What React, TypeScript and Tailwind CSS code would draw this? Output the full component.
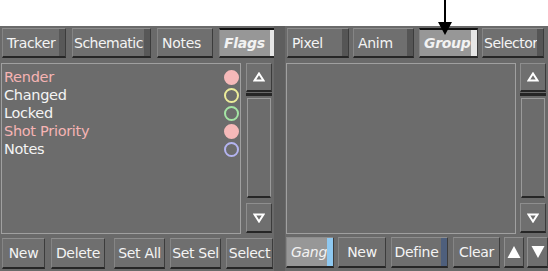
import React from 'react';

const font = { fontFamily: '"DejaVu Sans", "Liberation Sans", sans-serif' };

function Btn({
  label,
  w,
  strip,
  selected,
  italic,
  left,
  tight,
  className = '',
}: {
  label: string;
  w: number;
  strip?: string;
  selected?: boolean;
  italic?: boolean;
  left?: boolean;
  tight?: boolean;
  className?: string;
}) {
  return (
    <div
      className={`flex h-full shrink-0 border-t border-l border-t-[#8e8e8e] border-l-[#858585] border-b-2 border-b-[#262626] border-r border-r-[#3c3c3c] ${className}`}
      style={{ width: w }}
    >
      <div
        className={`flex-1 min-w-0 flex items-center text-[14px] leading-none whitespace-nowrap ${
          tight ? 'justify-start pl-[1px] tracking-[-0.5px]' : left ? 'justify-start pl-[4px] tracking-[-0.3px]' : 'justify-center tracking-[-0.3px]'
        } ${selected ? 'bg-[#979797]' : 'bg-[#6f6f6f]'} ${italic ? 'italic text-[#f2f2f2]' : 'text-[#f4f4f4]'}`}
      >
        {label}
      </div>
      {strip && <div className="w-[6px] h-full shrink-0" style={{ background: strip }} />}
    </div>
  );
}

function ScrollBar() {
  return (
    <div className="flex flex-col w-[26px] h-[171px] shrink-0">
      <div className="h-[29px] bg-[#6f6f6f] border-t border-l border-[#8e8e8e] border-b-2 border-b-[#262626] border-r border-r-[#3c3c3c] flex items-center justify-center">
        <svg width="12" height="10" viewBox="0 0 12 10">
          <path d="M6 1.5 L10.5 8.5 L1.5 8.5 Z" fill="none" stroke="#ffffff" strokeWidth="2" />
        </svg>
      </div>
      <div className="h-[3px] mt-[1px] bg-[#262626]" />
      <div className="mt-[2px] mx-[1px] h-[100px] bg-[#6c6c6c] border border-[#9a9a9a] border-b-2 border-b-[#262626]" />
      <div className="mt-[5px] h-[30px] bg-[#6f6f6f] border-t border-l border-[#8e8e8e] border-b-2 border-b-[#262626] border-r border-r-[#3c3c3c] flex items-center justify-center">
        <svg width="12" height="10" viewBox="0 0 12 10">
          <path d="M1.5 1.5 L10.5 1.5 L6 8.5 Z" fill="none" stroke="#ffffff" strokeWidth="2" />
        </svg>
      </div>
    </div>
  );
}

const flags = [
  { name: 'Render', color: '#f6b9b9', text: '#f6b4b4', filled: true },
  { name: 'Changed', color: '#ecec9a', text: '#f4f4f4', filled: false },
  { name: 'Locked', color: '#a4e4a4', text: '#f4f4f4', filled: false },
  { name: 'Shot Priority', color: '#f6b9b9', text: '#f6b4b4', filled: true },
  { name: 'Notes', color: '#b4b4f0', text: '#f4f4f4', filled: false },
];

export default function App() {
  return (
    <div className="relative w-[548px] h-[271px] bg-white overflow-hidden" style={font}>
      {/* pointer arrow */}
      <svg className="absolute left-[437px] top-0 z-10" width="16" height="36" viewBox="0 0 16 36">
        <line x1="8" y1="0" x2="8" y2="24" stroke="#000" strokeWidth="2" />
        <path d="M1 22 L15 22 L8 35 Z" fill="#000" />
      </svg>

      <div className="absolute left-0 right-0 top-[26px] bottom-0 bg-[#6a6a6a] flex">
        {/* left panel */}
        <div className="w-[274px] flex flex-col pl-[1px]">
          <div className="h-[30px] mt-[2px] flex gap-[6px] pl-[1px]">
            <Btn label="Tracker" w={64} strip="#585858" left />
            <Btn label="Schematic" w={79} strip="#585858" tight />
            <Btn label="Notes" w={56} left />
            <Btn label="Flags" w={58} strip="#e6e6e6" selected italic left className="border-t-2 border-t-[#111] font-semibold" />
          </div>
          <div className="flex gap-[5px] mt-[5px]">
            <div className="w-[240px] h-[171px] border border-[#a0a0a0] bg-[#6c6c6c] pt-[4px] pl-[2px] pr-[1px]">
              {flags.map((f) => (
                <div key={f.name} className="h-[18px] flex items-center justify-between">
                  <span className="text-[14.5px] leading-none tracking-[-0.3px]" style={{ color: f.text }}>
                    {f.name}
                  </span>
                  <span
                    className="w-[15px] h-[15px] rounded-full"
                    style={{
                      background: f.filled ? f.color : 'transparent',
                      border: `2px solid ${f.color}`,
                    }}
                  />
                </div>
              ))}
            </div>
            <ScrollBar />
          </div>
          <div className="h-[31px] mt-[4px] flex pl-[1px]">
            <Btn label="New" w={43} />
            <Btn label="Delete" w={54} className="ml-[6px]" />
            <Btn label="Set All" w={51} className="ml-[9px]" />
            <Btn label="Set Sel" w={51} className="ml-[5px]" />
            <Btn label="Select" w={47} className="ml-[5px]" />
          </div>
        </div>

        {/* divider */}
        <div className="w-[12px] bg-[#5e5e5e]" />

        {/* right panel */}
        <div className="flex-1 flex flex-col pl-[1px]">
          <div className="h-[30px] mt-[2px] flex pl-[1px]">
            <Btn label="Pixel" w={62} strip="#555555" left />
            <Btn label="Anim" w={61} strip="#555555" left className="ml-[4px]" />
            <Btn label="Group" w={59} strip="#e6e6e6" selected italic left className="ml-[5px] border-t-2 border-t-[#111] font-semibold" />
            <Btn label="Selector" w={62} strip="#555555" tight className="ml-[4px]" />
          </div>
          <div className="flex gap-[4px] mt-[5px]">
            <div className="w-[230px] h-[171px] border border-[#a0a0a0] bg-[#6c6c6c]" />
            <ScrollBar />
          </div>
          <div className="h-[31px] mt-[3px] flex">
            <Btn label="Gang" w={48} strip="#8ec8f0" selected italic left />
            <Btn label="New" w={48} className="ml-[4px]" />
            <Btn label="Define" w={57} strip="#4e5f7c" className="ml-[5px]" />
            <Btn label="Clear" w={47} className="ml-[5px]" />
            <div className="ml-[4px] w-[20px] h-full bg-[#6f6f6f] border-t border-l border-[#8e8e8e] border-b-2 border-b-[#262626] border-r border-r-[#3c3c3c] flex items-center justify-center">
              <svg width="14" height="14" viewBox="0 0 14 14">
                <path d="M7 1 L13.5 13 L0.5 13 Z" fill="#ffffff" />
              </svg>
            </div>
            <div className="ml-[3px] w-[21px] h-full bg-[#6f6f6f] border-t border-l border-[#8e8e8e] border-b-2 border-b-[#262626] border-r border-r-[#3c3c3c] flex items-center justify-center">
              <svg width="14" height="14" viewBox="0 0 14 14">
                <path d="M0.5 1 L13.5 1 L7 13 Z" fill="#ffffff" />
              </svg>
            </div>
          </div>
        </div>
      </div>
    </div>
  );
}
